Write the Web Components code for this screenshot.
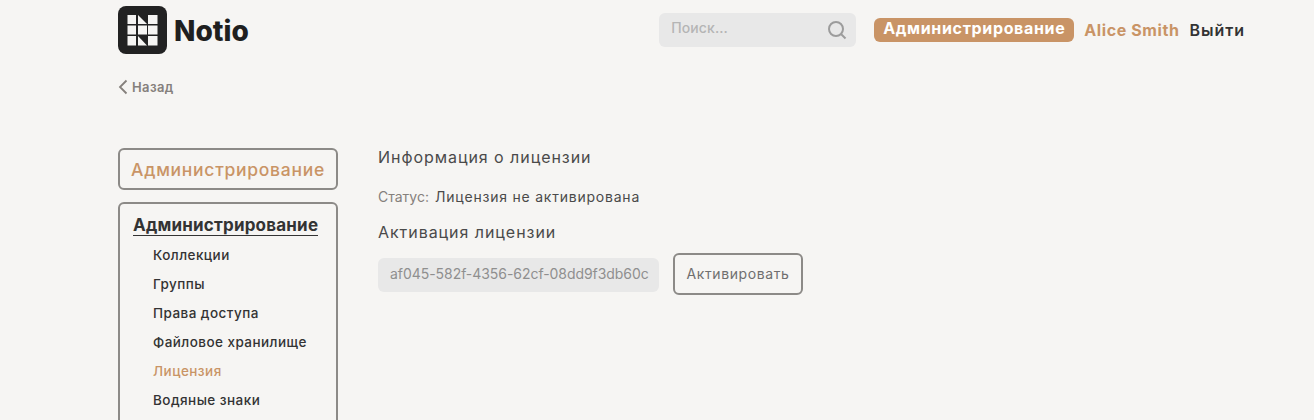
<!DOCTYPE html>
<html lang="ru">
<head>
<meta charset="utf-8">
<title>Notio</title>
<style>
  html, body { margin: 0; height: 100%; overflow: hidden; background: #f6f5f3; }
  body { font-family: Inter, "Noto Sans", sans-serif; color: #333; }
</style>
</head>
<body>
<notio-page>
  <notio-header slot="header"></notio-header>
  <notio-side slot="side"></notio-side>
  <notio-license slot="main"></notio-license>
</notio-page>

<script>
/**
 * Page frame: header, back link, sidebar column and content column.
 */
customElements.define('notio-page',
  class extends HTMLElement {
    constructor () {
      super()
      this.attachShadow({ mode: 'open' }).innerHTML = `
<style>
  :host { display: block; padding: 0 69px 0 118px; }
  #back {
    display: flex; align-items: center; gap: 4px;
    margin-top: 17px; height: 20px;
    font-size: 13px; font-weight: 600; color: #85807c; letter-spacing: .4px;
  }
  #cols { display: flex; gap: 40px; margin-top: 51px; }
</style>
<slot name="header"></slot>
<div id="back">
  <svg width="10" height="16" viewBox="0 0 10 16"><path d="M8.500 1.500 2 8l6.500 6.500" fill="none" stroke="#85807c" stroke-width="1.800"/></svg>
  Назад
</div>
<div id="cols">
  <slot name="side"></slot>
  <slot name="main"></slot>
</div>`
    }
  }
)

/**
 * Top bar with logo, search and the user links.
 */
customElements.define('notio-header',
  class extends HTMLElement {
    constructor () {
      super()
      this.attachShadow({ mode: 'open' }).innerHTML = `
<style>
  :host { display: flex; align-items: center; height: 60px; }
  #logo { display: flex; align-items: center; gap: 7px; margin-right: auto; font-size: 28px; line-height: 34px; font-weight: 800; color: #1f1f1f; }
  #logo span { padding-top: 2px; }
  #search {
    display: flex; align-items: center; justify-content: space-between;
    box-sizing: border-box; width: 197px; height: 34px; padding: 0 9px 5px 12px;
    border-radius: 6px; background: #e8e8e8; color: #b5b5b5; font-size: 14px; font-weight: 500;
    letter-spacing: .1px; margin-right: 18px;
  }
  #search svg { margin-top: 5px; }
  #admin {
    box-sizing: border-box; width: 200px; text-align: center; height: 24px; line-height: 21px; border-radius: 6px;
    background: #c99466; color: #fff; font-size: 16px; font-weight: 700; letter-spacing: .65px;
    margin-right: 10px; white-space: nowrap;
  }
  #user { color: #c99466; font-size: 16px; font-weight: 700; letter-spacing: .6px; margin-right: 10px; line-height: 22px; }
  #exit { color: #333; font-size: 16px; font-weight: 600; letter-spacing: .95px; line-height: 22px; }
</style>
<div id="logo">
  <svg width="49" height="48" viewBox="0 0 49 48">
    <rect width="49" height="48" rx="8" fill="#222"/>
    <g fill="#f6f5f3">
      <rect x="9.500" y="9" width="8.500" height="9"/>
      <path d="M20 9l9 9h-9z"/>
      <rect x="30" y="9" width="9.500" height="9"/>
      <rect x="9.500" y="19.500" width="8.500" height="9"/>
      <rect x="20" y="19.500" width="9" height="9"/>
      <rect x="30" y="19.500" width="9.500" height="9"/>
      <rect x="9.500" y="30" width="8.500" height="9.500"/>
      <path d="M20 30l9 9.500h-9z"/>
      <rect x="30" y="30" width="9.500" height="9.500"/>
    </g>
  </svg>
  <span>Notio</span>
</div>
<div id="search">
  <span>Поиск...</span>
  <svg width="20" height="20" viewBox="0 0 20 20" fill="none" stroke="#9c9c9c" stroke-width="2"><circle cx="9" cy="9" r="7"/><path d="m14 14 4.500 4.500"/></svg>
</div>
<span id="admin">Администрирование</span>
<span id="user">Alice Smith</span>
<span id="exit">Выйти</span>`
    }
  }
)

/**
 * Sidebar with the section title and the admin menu.
 */
customElements.define('notio-side',
  class extends HTMLElement {
    constructor () {
      super()
      this.attachShadow({ mode: 'open' }).innerHTML = `
<style>
  :host { display: block; width: 220px; flex: none; }
  .box { box-sizing: border-box; border: 2px solid #8c8a87; border-radius: 6px; }
  #title {
    height: 42px; line-height: 40px; text-align: center; white-space: nowrap;
    color: #c99466; font-size: 17.500px; font-weight: 500; letter-spacing: .72px; margin-bottom: 12px;
  }
  #menu { padding: 11px 18px 0 13px; height: 300px; }
  #head { font-size: 17px; font-weight: 700; letter-spacing: .2px; color: #333; border-bottom: 1px solid #333; line-height: 20px; height: 20px; }
  ul { list-style: none; margin: 5px 0 0; padding: 0 0 0 20px; font-size: 13.500px; font-weight: 500; letter-spacing: .45px; color: #333; }
  li { height: 29px; line-height: 29px; white-space: nowrap; }
  li.on { color: #c99466; }
</style>
<div class="box" id="title">Администрирование</div>
<div class="box" id="menu">
  <div id="head">Администрирование</div>
  <ul>
    <li>Коллекции</li>
    <li>Группы</li>
    <li>Права доступа</li>
    <li>Файловое хранилище</li>
    <li class="on">Лицензия</li>
    <li>Водяные знаки</li>
  </ul>
</div>`
    }
  }
)

/**
 * License information and activation form.
 */
customElements.define('notio-license',
  class extends HTMLElement {
    constructor () {
      super()
      this.attachShadow({ mode: 'open' }).innerHTML = `
<style>
  :host { display: block; color: #4a4a4a; margin-top: -1px; }
  h2 { margin: 0; font-size: 16px; font-weight: 400; letter-spacing: .95px; line-height: 20px; color: #4a4a4a; }
  #status { display: flex; gap: 6px; margin-top: 20px; font-size: 14px; line-height: 20px; font-weight: 400; }
  #status span:first-child { color: #85807c; }
  #status span:last-child { letter-spacing: .78px; }
  #act { margin-top: 15px; }
  #form { display: flex; align-items: center; gap: 14px; margin-top: 11px; }
  #key {
    box-sizing: border-box; width: 281px; height: 34px; line-height: 32px; padding: 0 12px; margin-top: 2px;
    border-radius: 6px; background: #e8e8e8; color: #8f8f8f; font-size: 14px; letter-spacing: -.05px; white-space: nowrap;
  }
  #btn {
    box-sizing: border-box; width: 130px; height: 42px; line-height: 38px; text-align: center;
    border: 2px solid #8c8a87; border-radius: 6px; color: #6f6f6f; font-size: 14px; letter-spacing: .6px;
  }
</style>
<h2>Информация о лицензии</h2>
<div id="status"><span>Статус:</span><span>Лицензия не активирована</span></div>
<h2 id="act">Активация лицензии</h2>
<div id="form">
  <div id="key">af045-582f-4356-62cf-08dd9f3db60c</div>
  <div id="btn">Активировать</div>
</div>`
    }
  }
)
</script>
</body>
</html>
